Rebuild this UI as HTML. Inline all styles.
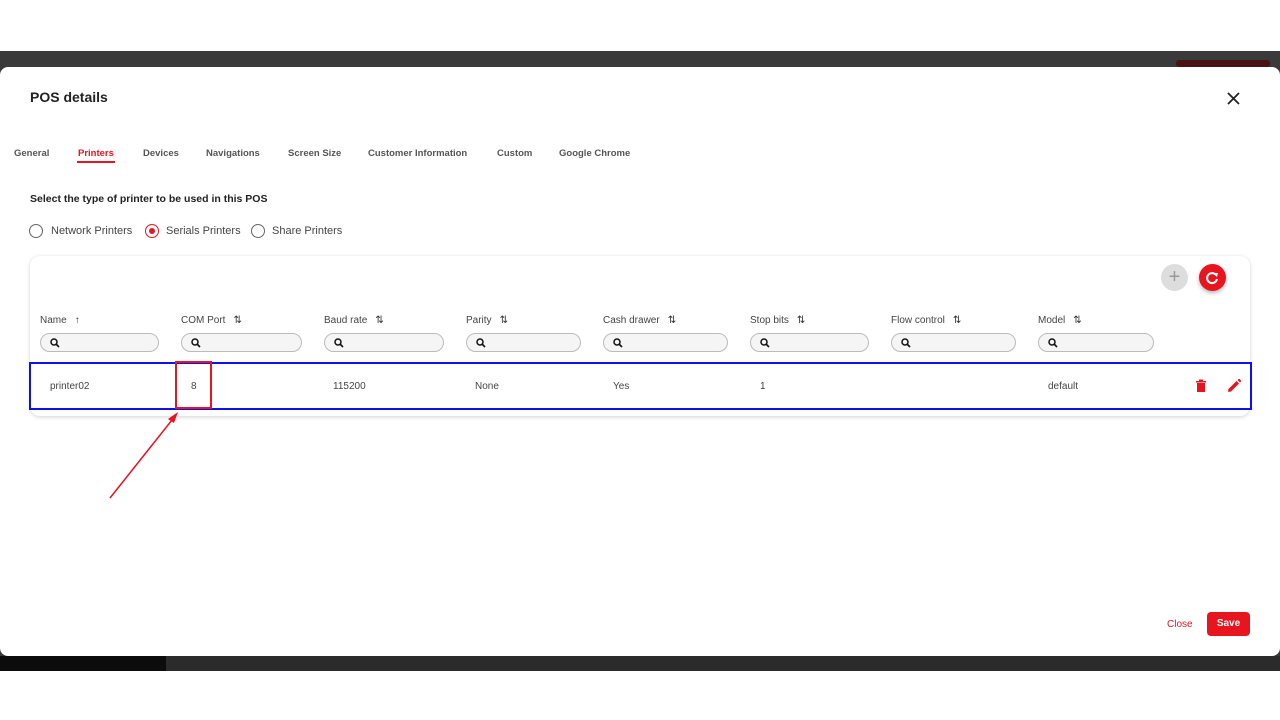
<!DOCTYPE html>
<html><head><meta charset="utf-8"><style>
*{box-sizing:border-box;margin:0;padding:0}
body{width:1280px;height:720px;background:#fff;position:relative;overflow:hidden;font-family:"Liberation Sans",sans-serif;color:#333}
.bg{position:absolute;left:0;top:51px;width:1280px;height:620px;background:#3a3a3a}
.bgb{position:absolute;left:0;top:656px;width:1280px;height:15px;background:#2b2b2b}
.bgl{position:absolute;left:0;top:656px;width:166px;height:15px;background:#0c0c0c}
.dlg{position:absolute;left:0;top:67px;width:1280px;height:589px;background:#fff;border-radius:8px}
.abs{position:absolute}
.t{font-size:11px;color:#444}
.tab{position:absolute;top:148px;font-size:9.5px;color:#555;font-weight:bold}
.radio{position:absolute;top:224px;width:14px;height:14px;border:1.5px solid #666;border-radius:50%}
.card{position:absolute;left:30px;top:256px;width:1220px;height:160px;border-radius:10px;box-shadow:0 1px 4px rgba(0,0,0,.18);background:#fff}
.hd{position:absolute;top:315px;font-size:10px;color:#444}
.hd span{margin-left:8px;font-size:10px;color:#333}
.sr{position:absolute;top:333px;height:19px;border:1px solid #bbb;border-radius:10px;background:#f5f5f5}
.sr svg{position:absolute;left:9px;top:4px}
.cell{position:absolute;top:381px;font-size:10px;color:#444}
</style></head><body>
<div class="bg"></div><div class="bgb"></div><div class="bgl"></div>
<div class="abs" style="left:1176px;top:60px;width:94px;height:7px;background:#4a1212;border-radius:3px"></div>
<div class="dlg"></div>
<div class="abs" style="left:30px;top:89px;font-size:14px;font-weight:bold;color:#222">POS details</div>
<svg class="abs" style="left:1227px;top:92px" width="13" height="13" viewBox="0 0 13 13"><path d="M1 1L12 12M12 1L1 12" stroke="#222" stroke-width="1.8"/></svg>
<div class="tab" style="left:14px">General</div>
<div class="tab" style="left:78px;color:#e8141e">Printers</div>
<div class="abs" style="left:77px;top:161px;width:38px;height:2px;background:#e8141e"></div>
<div class="tab" style="left:143px">Devices</div>
<div class="tab" style="left:206px">Navigations</div>
<div class="tab" style="left:288px">Screen Size</div>
<div class="tab" style="left:368px">Customer Information</div>
<div class="tab" style="left:497px">Custom</div>
<div class="tab" style="left:559px">Google Chrome</div>
<div class="abs" style="left:30px;top:193px;font-size:10.5px;font-weight:bold;color:#222">Select the type of printer to be used in this POS</div>
<div class="radio" style="left:29px"></div><div class="abs t" style="left:51px;top:225px">Network Printers</div>
<div class="radio" style="left:145px;border-color:#e8141e"><div style="position:absolute;left:2.5px;top:2.5px;width:6px;height:6px;border-radius:50%;background:#e8141e"></div></div><div class="abs t" style="left:166px;top:225px">Serials Printers</div>
<div class="radio" style="left:251px"></div><div class="abs t" style="left:272px;top:225px">Share Printers</div>
<div class="card"></div>
<div class="abs" style="left:1161px;top:264px;width:27px;height:27px;border-radius:50%;background:#ddd;color:#999;font-size:20px;line-height:26px;text-align:center">+</div>
<div class="abs" style="left:1199px;top:264px;width:27px;height:27px;border-radius:50%;background:#e8141e;box-shadow:0 2px 4px rgba(0,0,0,.3)"><svg width="27" height="27" viewBox="0 0 27 27"><path d="M17 11A5 5 0 1 0 18 15" fill="none" stroke="#fff" stroke-width="2"/><path d="M14 9L19 9L18 13Z" fill="#fff"/></svg></div>
<div class="hd" style="left:40px">Name<span>↑</span></div>
<div class="hd" style="left:181px">COM Port<span>⇅</span></div>
<div class="hd" style="left:324px">Baud rate<span>⇅</span></div>
<div class="hd" style="left:466px">Parity<span>⇅</span></div>
<div class="hd" style="left:603px">Cash drawer<span>⇅</span></div>
<div class="hd" style="left:750px">Stop bits<span>⇅</span></div>
<div class="hd" style="left:891px">Flow control<span>⇅</span></div>
<div class="hd" style="left:1038px">Model<span>⇅</span></div>
<div class="sr" style="left:40px;width:119px"><svg width="10" height="10"><circle cx="4" cy="4" r="3" fill="none" stroke="#111" stroke-width="1.5"/><path d="M6 6L9 9" stroke="#111" stroke-width="1.6"/></svg></div>
<div class="sr" style="left:181px;width:121px"><svg width="10" height="10"><circle cx="4" cy="4" r="3" fill="none" stroke="#111" stroke-width="1.5"/><path d="M6 6L9 9" stroke="#111" stroke-width="1.6"/></svg></div>
<div class="sr" style="left:324px;width:120px"><svg width="10" height="10"><circle cx="4" cy="4" r="3" fill="none" stroke="#111" stroke-width="1.5"/><path d="M6 6L9 9" stroke="#111" stroke-width="1.6"/></svg></div>
<div class="sr" style="left:466px;width:115px"><svg width="10" height="10"><circle cx="4" cy="4" r="3" fill="none" stroke="#111" stroke-width="1.5"/><path d="M6 6L9 9" stroke="#111" stroke-width="1.6"/></svg></div>
<div class="sr" style="left:603px;width:125px"><svg width="10" height="10"><circle cx="4" cy="4" r="3" fill="none" stroke="#111" stroke-width="1.5"/><path d="M6 6L9 9" stroke="#111" stroke-width="1.6"/></svg></div>
<div class="sr" style="left:750px;width:119px"><svg width="10" height="10"><circle cx="4" cy="4" r="3" fill="none" stroke="#111" stroke-width="1.5"/><path d="M6 6L9 9" stroke="#111" stroke-width="1.6"/></svg></div>
<div class="sr" style="left:891px;width:125px"><svg width="10" height="10"><circle cx="4" cy="4" r="3" fill="none" stroke="#111" stroke-width="1.5"/><path d="M6 6L9 9" stroke="#111" stroke-width="1.6"/></svg></div>
<div class="sr" style="left:1038px;width:116px"><svg width="10" height="10"><circle cx="4" cy="4" r="3" fill="none" stroke="#111" stroke-width="1.5"/><path d="M6 6L9 9" stroke="#111" stroke-width="1.6"/></svg></div>
<div class="abs" style="left:29px;top:362px;width:1223px;height:48px;border:2px solid #1010e8"></div>
<div class="abs" style="left:175px;top:361px;width:37px;height:48px;border:2px solid #e8141e"></div>
<div class="cell" style="left:50px">printer02</div>
<div class="cell" style="left:191px">8</div>
<div class="cell" style="left:333px">115200</div>
<div class="cell" style="left:475px">None</div>
<div class="cell" style="left:613px">Yes</div>
<div class="cell" style="left:760px">1</div>
<div class="cell" style="left:1048px">default</div>
<svg class="abs" style="left:1195px;top:379px" width="12" height="14" viewBox="0 0 12 14"><path d="M1 2H11V3.5H1ZM4 0.5H8V2H4ZM2 4H10V13H2Z" fill="#e8141e"/></svg>
<svg class="abs" style="left:1227px;top:379px" width="14" height="14" viewBox="0 0 14 14"><path d="M1 13L1.5 10L9.5 2L12 4.5L4 12.5Z M10.5 1L12 -0.5L14.5 2L13 3.5Z" fill="#e8141e"/></svg>
<svg class="abs" style="left:105px;top:410px" width="75" height="92"><path d="M5 88L71 5" stroke="#e8141e" stroke-width="1.5"/><path d="M73 2L63 9L69 13Z" fill="#e8141e"/></svg>
<div class="abs" style="left:1167px;top:619px;font-size:10px;color:#e8141e">Close</div>
<div class="abs" style="left:1207px;top:612px;width:43px;height:24px;background:#e8141e;border-radius:4px;color:#fff;font-size:10px;font-weight:bold;text-align:center;line-height:24px">Save</div>
</body></html>
